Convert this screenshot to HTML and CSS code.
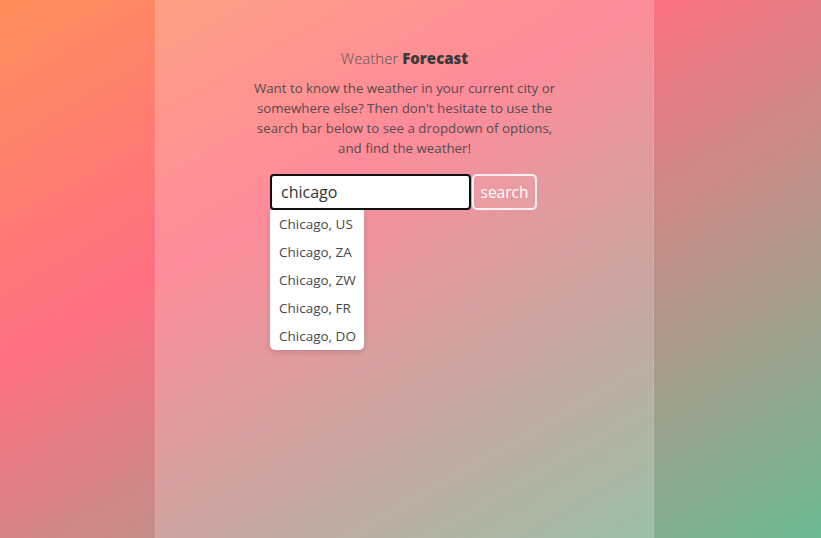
FILE: index.html
```html
<!DOCTYPE html>
<html lang="en">
<head>
<meta charset="utf-8">
<title>Weather Forecast</title>
<link rel="stylesheet" href="styles.css">
</head>
<body>
<main class="panel">
  <h1 class="title"><span class="title-light">Weather</span> <strong>Forecast</strong></h1>
  <p class="intro">Want to know the weather in your current city or somewhere else? Then don't hesitate to use the search bar below to see a dropdown of options, and find the weather!</p>
  <form class="search">
    <div class="field">
      <input class="search-input" type="text" value="chicago" autofocus>
      <ul class="dropdown">
        <li>Chicago, US</li>
        <li>Chicago, ZA</li>
        <li>Chicago, ZW</li>
        <li>Chicago, FR</li>
        <li>Chicago, DO</li>
      </ul>
    </div>
    <button class="search-btn" type="button">search</button>
  </form>
</main>
</body>
</html>
```

FILE: styles.css
```css
* { box-sizing: border-box; }
html, body { height: 100%; }
body {
  margin: 0;
  font-family: "Open Sans", "Noto Sans", sans-serif;
  background: linear-gradient(150deg, #ff8f5b 0%, #ff6f82 36%, #6cbb92 100%);
  display: flex;
}
.panel {
  margin-left: 155px;
  width: 499px;
  min-height: 100%;
  background: rgba(255, 255, 255, 0.2);
  border-left: 1px solid rgba(255, 255, 255, 0.1);
  border-right: 1px solid rgba(255, 255, 255, 0.1);
  display: flex;
  flex-direction: column;
  align-items: center;
  padding-top: 47px;
}
.title {
  margin: 0;
  font-size: 15px;
  line-height: 22px;
  font-weight: 400;
  color: #3a3a3a;
}
.title-light { font-weight: 300; color: #555; }
.title strong { font-weight: 800; }
.intro {
  margin: 9px 0 0;
  width: 320px;
  text-align: center;
  font-size: 13.3px;
  line-height: 20px;
  color: #574b4d;
}
.search {
  margin-top: 16px;
  margin-right: 2px;
  display: flex;
  align-items: flex-start;
}
.field { position: relative; }
.search-input {
  display: block;
  width: 201px;
  height: 36px;
  border: 2px solid #111;
  border-radius: 4px;
  padding: 0 9px;
  font-family: inherit;
  font-size: 16px;
  color: #333;
  background: #fff;
  outline: none;
}
.dropdown {
  position: absolute;
  top: 36px;
  left: 0;
  margin: 0;
  padding: 0;
  list-style: none;
  width: 94px;
  background: #fff;
  border-radius: 0 0 5px 5px;
  box-shadow: 0 2px 6px rgba(0, 0, 0, 0.15);
}
.dropdown li {
  height: 28px;
  line-height: 28px;
  padding-left: 9px;
  font-size: 13.5px;
  color: #474747;
  white-space: nowrap;
}
.search-btn {
  margin-left: 1px;
  width: 65px;
  height: 36px;
  padding: 0;
  border: 2px solid rgba(255, 255, 255, 0.85);
  border-radius: 5px;
  background: rgba(255, 255, 255, 0.05);
  color: #fff;
  font-family: inherit;
  font-size: 15.5px;
}
```
